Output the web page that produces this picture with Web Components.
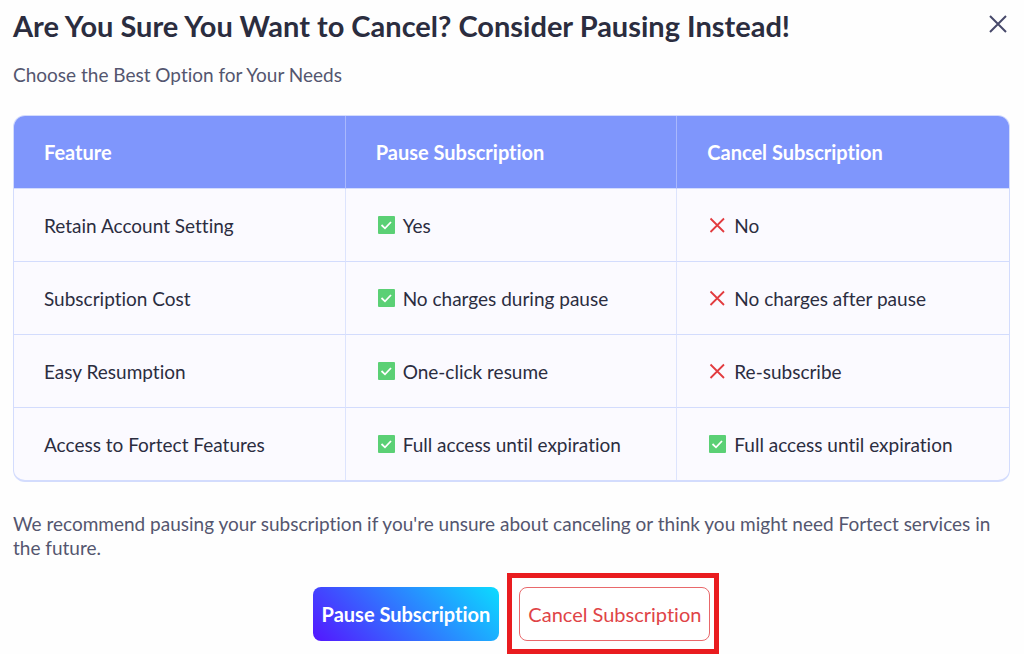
<!DOCTYPE html>
<html lang="en">
<head>
<meta charset="utf-8">
<meta name="viewport" content="width=device-width, initial-scale=1">
<title>Cancel subscription</title>
<style>
  body {
    margin: 0;
    background: #fefefe;
    color: #2b2d3f;
    font-family: Lato, "Liberation Sans", sans-serif;
    font-size: 19px;
    line-height: 24px;
    font-variant-ligatures: none;
  }
</style>
</head>
<body>
<cancel-dialog>
  <span slot="title">Are You Sure You Want to Cancel? Consider Pausing Instead!</span>
  <span slot="subtitle">Choose the Best Option for Your Needs</span>
  <compare-table></compare-table>
  <span slot="note">We recommend pausing your subscription if you're unsure about canceling or think you might need Fortect services in the future.</span>
  <action-button slot="actions" kind="primary">Pause Subscription</action-button>
  <focus-frame slot="actions"><action-button kind="danger">Cancel Subscription</action-button></focus-frame>
</cancel-dialog>

<script>
customElements.define('status-mark', class extends HTMLElement {
  constructor() {
    super();

    let icons = {
      yes: `<rect x="2" y="0" width="17" height="18" rx="1" fill="#5bd075"/>
            <path d="M5.500 9l3.500 3.300 6-6.300" stroke="#fff" stroke-width="1.800"/>`,
      no: `<path d="M3.500 2.500l13.500 13.500M17 2.500L3.500 16" stroke="#e23b3f" stroke-width="1.800"/>`
    };

    let shadowRoot = this.attachShadow({mode: 'open'});
    shadowRoot.innerHTML = `
          <style>
          :host {
            display: flex;
            align-items: center;
            gap: 8px;
          }
          svg {
            flex: none;
            margin-bottom: 2px;
          }</style>

          <svg width="19" height="18" viewBox="0 0 19 18" fill="none" aria-hidden="true">${icons[this.getAttribute('state')]}</svg>
          <slot></slot>`;
  }
});

customElements.define('compare-table', class extends HTMLElement {
  constructor() {
    super();

    let columns = ['Feature', 'Pause Subscription', 'Cancel Subscription'];
    let rows = [
      ['Retain Account Setting', ['yes', 'Yes'], ['no', 'No']],
      ['Subscription Cost', ['yes', 'No charges during pause'], ['no', 'No charges after pause']],
      ['Easy Resumption', ['yes', 'One-click resume'], ['no', 'Re-subscribe']],
      ['Access to Fortect Features', ['yes', 'Full access until expiration'], ['yes', 'Full access until expiration']]
    ];

    let head = columns.map(name => `<th scope="col">${name}</th>`).join('');
    let body = rows.map(([feature, ...cells]) => `
            <tr>
              <th scope="row">${feature}</th>
              ${cells.map(([state, text]) => `<td><status-mark state="${state}">${text}</status-mark></td>`).join('')}
            </tr>`).join('');

    let shadowRoot = this.attachShadow({mode: 'open'});
    shadowRoot.innerHTML = `
          <style>
          :host {
            display: block;
            border: 1px solid #d3dcfd;
            border-bottom-width: 2px;
            border-radius: 12px;
            overflow: hidden;
            background: #fbfaff;
          }
          table {
            width: 100%;
            table-layout: fixed;
            border-collapse: separate;
            border-spacing: 0;
          }
          th, td {
            box-sizing: border-box;
            height: 73px;
            padding: 2px 30px 0;
            border-right: 1px solid #dde4fd;
            border-bottom: 1px solid #d3dcfd;
            text-align: left;
            font-weight: 400;
          }
          thead th {
            padding-top: 0;
            background: #7f96fc;
            border-right-color: #a9b8fd;
            color: #fff;
            font-size: 20px;
            font-weight: 700;
          }
          tr > :last-child {
            border-right: 0;
          }
          tbody tr:last-child > * {
            height: 72px;
            border-bottom: 0;
          }</style>

          <table>
            <thead><tr>${head}</tr></thead>
            <tbody>${body}</tbody>
          </table>`;
  }
});

customElements.define('action-button', class extends HTMLElement {
  constructor() {
    super();

    let shadowRoot = this.attachShadow({mode: 'open'});
    shadowRoot.innerHTML = `
          <style>
          :host {
            display: block;
          }
          button {
            display: block;
            padding: 14px 8px;
            border: 1px solid transparent;
            border-radius: 8px;
            font: inherit;
            font-size: 20px;
            font-variant-ligatures: none;
            cursor: pointer;
          }
          :host([kind="primary"]) button {
            background: linear-gradient(45deg, #5416ff, #0bdcff) border-box;
            color: #fff;
            font-weight: 700;
          }
          :host([kind="danger"]) button {
            border-color: #e8686b;
            background: #fff;
            color: #df4447;
          }</style>

          <button type="button"><slot></slot></button>`;
  }
});

customElements.define('focus-frame', class extends HTMLElement {
  constructor() {
    super();

    let shadowRoot = this.attachShadow({mode: 'open'});
    shadowRoot.innerHTML = `
          <style>
          :host {
            display: block;
            position: relative;
          }
          #frame {
            position: absolute;
            inset: -14px -9px -13px -12px;
            border: 5px solid #e91c1f;
            pointer-events: none;
          }</style>

          <slot></slot>
          <div id="frame"></div>`;
  }
});

customElements.define('cancel-dialog', class extends HTMLElement {
  constructor() {
    super();

    let shadowRoot = this.attachShadow({mode: 'open'});
    shadowRoot.innerHTML = `
          <style>
          :host {
            display: block;
            padding: 8px 14px 13px 13px;
          }
          header {
            display: flex;
            justify-content: space-between;
            align-items: flex-start;
          }
          h1 {
            margin: 0;
            font-size: 29px;
            line-height: 36px;
            font-weight: 700;
          }
          #close {
            display: block;
            padding: 6px 2px;
            border: 0;
            background: none;
            color: #47496a;
            cursor: pointer;
          }
          #close svg {
            display: block;
          }
          p {
            margin: 0;
            color: #54566f;
          }
          #subtitle {
            margin: 19px 0 28px;
          }
          #note {
            margin-top: 30px;
          }
          footer {
            display: flex;
            justify-content: center;
            gap: 20px;
            margin-top: 27px;
          }</style>

          <header>
            <h1><slot name="title"></slot></h1>
            <button id="close" type="button" aria-label="Close">
              <svg width="20" height="20" viewBox="0 0 20 20" fill="none" stroke="currentColor" stroke-width="2" aria-hidden="true"><path d="M2 2l16 16M18 2L2 18"/></svg>
            </button>
          </header>
          <p id="subtitle"><slot name="subtitle"></slot></p>
          <slot></slot>
          <p id="note"><slot name="note"></slot></p>
          <footer><slot name="actions"></slot></footer>`;
  }
});
</script>
</body>
</html>
